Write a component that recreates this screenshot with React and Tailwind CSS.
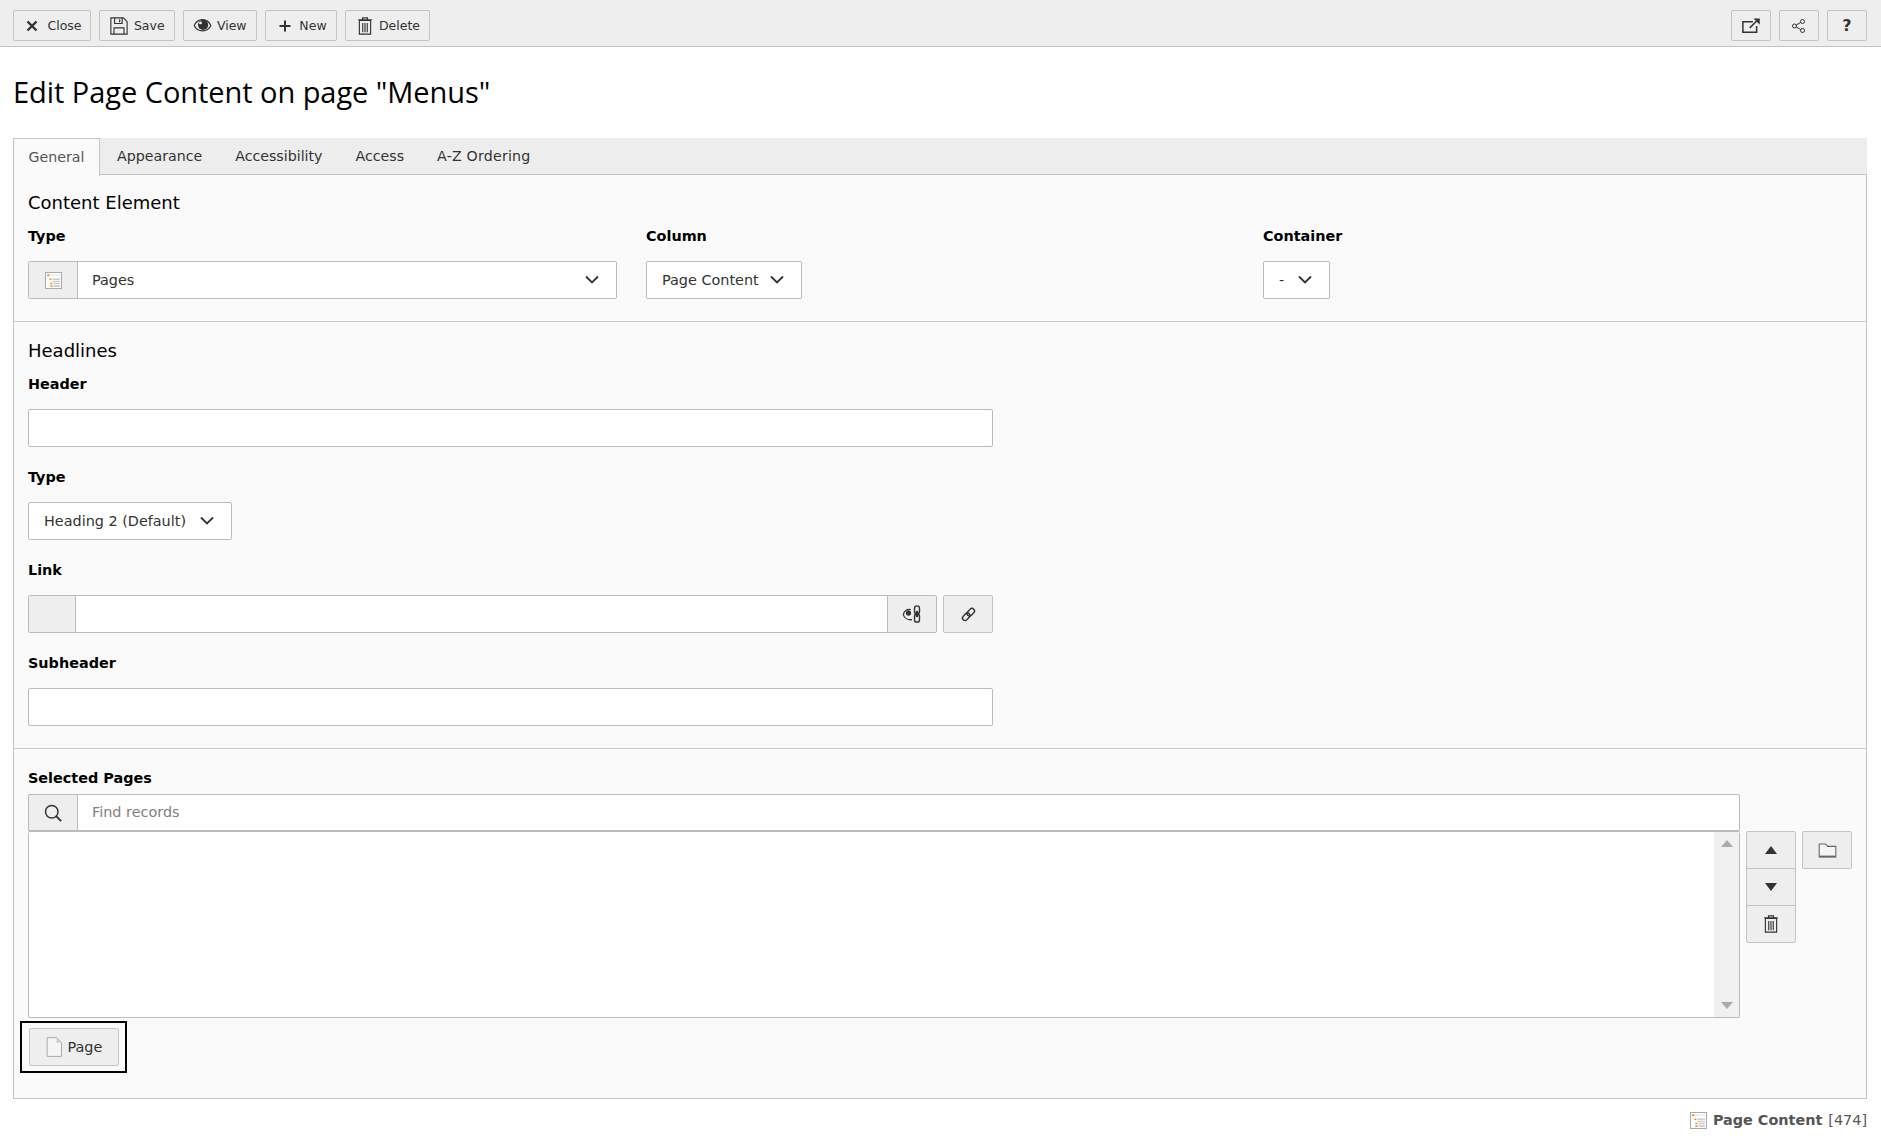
const Ico = ({ children, size = 16, cls = "" }) => (
  <svg width={size} height={size} viewBox="0 0 16 16" className={"shrink-0 " + cls} fill="none">{children}</svg>
);
const C = "#333";
const CloseI = () => <Ico><path d="M3.500 3.500l9 9M12.500 3.500l-9 9" stroke={C} strokeWidth="2.400" /></Ico>;
const SaveI = () => <Ico size={20}><path d="M1.500 1.500h10l3 3v10h-13z" stroke={C} strokeWidth=".9" /><path d="M4.500 1.500v4.500h6v-4.500M8.500 2.500v2.500M4 14.500v-5h8v5" stroke={C} strokeWidth=".9" /></Ico>;
const EyeI = () => <Ico size={19}><path d="M1 8C2.500 4.500 5 3 8 3s5.500 1.500 7 5c-1.500 3.500-4 4.500-7 4.500S2.500 11.500 1 8z" stroke={C} strokeWidth="1" /><circle cx="8.500" cy="7.500" r="4.300" fill={C} /><circle cx="6.300" cy="5.800" r="1.200" fill="#eee" /></Ico>;
const PlusI = () => <Ico><path d="M8 2.500v11M2.500 8h11" stroke={C} strokeWidth="2" /></Ico>;
const TrashI = () => <Ico size={20}><path d="M3.500 3.500h9v11h-9z M2.500 3h11 M6 3V1.500h4V3" stroke={C} strokeWidth=".9" /><path d="M6.200 5.500v7.500M8 5.500v7.500M9.800 5.500v7.500" stroke={C} strokeWidth=".9" /></Ico>;
const ExtI = () => <Ico size={20}><path d="M9.500 4.500H1.500v8.500h11V8" stroke={C} strokeWidth="1.200" /><path d="M7 9.500L12.500 4" stroke={C} strokeWidth="1.200" /><path d="M10 2h5v5z" fill={C} /></Ico>;
const ShareI = () => <Ico><circle cx="3.500" cy="8" r="2" stroke={C} /><circle cx="11.500" cy="3.500" r="2" stroke={C} /><circle cx="11.500" cy="12.500" r="2" stroke={C} /><path d="M5.200 7l4.600-2.600M5.200 9l4.600 2.600" stroke={C} /></Ico>;
const Chevron = () => <Ico size={16}><path d="M2 4.500l6 6 6-6" stroke={C} strokeWidth="1.800" /></Ico>;
const ContentI = ({ size = 17 }) => <Ico size={size}>
  <path d="M.5.500h15v15H.5z" fill="#fff" stroke="#aaa" />
  <path d="M2 2h12v2H2z" fill="#eee" />
  <path d="M2 2h2v2H2zM4 6h2v1.500H4zM5 10h2v1.500H5zM5 12.500h2V14H5z" fill="#f7941d" />
  <path d="M7 6h7v1.500H7zM7 8.200h7v1.300H7zM8 10h6v1.500H8zM8 12.500h6V14H8z" fill="#ccc" />
</Ico>;
const LinkI = () => <Ico size={17}><g transform="rotate(-45 8 8)"><rect x="1" y="5.600" width="8" height="4.800" rx="2.400" stroke={C} strokeWidth="1.300" /><rect x="7" y="5.600" width="8" height="4.800" rx="2.400" stroke={C} strokeWidth="1.300" /></g></Ico>;
const EyeLinkI = () => <Ico size={20}>
  <path d="M1 8.500C1.500 5.500 4 4 7 4.500" stroke={C} strokeWidth="1.100" />
  <path d="M1 8.500C2 11.500 5 13 8 12.500" stroke={C} strokeWidth="1.100" />
  <circle cx="5.200" cy="7.200" r="2.100" fill={C} />
  <rect x="10" y="1.500" width="4" height="6.500" rx="2" stroke={C} strokeWidth="1.100" />
  <rect x="10" y="8" width="4" height="6.500" rx="2" stroke={C} strokeWidth="1.100" />
  <path d="M12 5.500v5" stroke={C} strokeWidth="1.800" />
</Ico>;
const SearchI = () => <Ico size={20}><circle cx="7" cy="7" r="5" stroke={C} strokeWidth="1.200" /><path d="M10.500 10.500l4 4" stroke={C} strokeWidth="1.500" /></Ico>;
const FolderI = () => <Ico size={19}><path d="M1 13.500v-11h5.500l1.500 2h7v9z" stroke="#666" strokeWidth=".9" fill="#f5f5f5" /><path d="M1 13h14" stroke="#666" strokeWidth="1.400" /></Ico>;
const PageI = () => <Ico size={20}><path d="M2.500.500h7.500l4 4v11H2.500z" fill="#f5f5f5" stroke="#aaa" strokeWidth=".8" /><path d="M10 .500l4 4h-4z" fill="#ccc" /></Ico>;

const btn = "flex items-center justify-center bg-[#eeeeee] border border-[#c3c3c3] rounded-[2px] text-[#333]";
const field = "bg-white border border-[#bbbbbb] rounded-[2px]";
const label = "font-bold text-black text-[14.400px] leading-[20px]";

const TopBtn = ({ icon, text, w, gap, pl = 0 }) => (
  <button className={btn + " h-[31px] text-[12.500px] text-[#333]"} style={{ width: w, gap, paddingLeft: pl }}>{icon}<span className="pt-[2px]">{text}</span></button>
);

const Select = ({ text, w }) => (
  <div className={field + " h-[38px] flex items-center justify-between pl-[15px] pr-[16px] text-[14.400px] text-[#333]"} style={{ width: w }}>
    <span className="pt-[2px]">{text}</span><Chevron />
  </div>
);

export default function App() {
  return (
    <div className="w-full min-h-[1139px] bg-white text-[#333] font-['DejaVu_Sans',sans-serif]">
      <header className="h-[47px] bg-[#eeeeee] border-b border-[#c3c3c3] flex items-start justify-between pt-[10px] pl-[13px] pr-[14px]">
        <div className="flex gap-[8px]">
          <TopBtn icon={<CloseI />} text="Close" w={78} gap={7} pl={2} />
          <TopBtn icon={<SaveI />} text="Save" w={76} gap={4.500} />
          <TopBtn icon={<EyeI />} text="View" w={74} gap={4.500} />
          <TopBtn icon={<PlusI />} text="New" w={72} gap={6} pl={2} />
          <TopBtn icon={<TrashI />} text="Delete" w={85} gap={4} />
        </div>
        <div className="flex gap-[8px]">
          <button className={btn + " w-[40px] h-[31px]"}><ExtI /></button>
          <button className={btn + " w-[40px] h-[31px]"}><ShareI /></button>
          <button className={btn + " w-[40px] h-[31px] font-bold text-[16px]"}>?</button>
        </div>
      </header>

      <h1 className="h-[91px] pb-[2px] flex items-center pl-[13px] text-[29px] text-black font-['Open_Sans',sans-serif] tracking-[-0.05px]">Edit Page Content on page "Menus"</h1>

      <div className="ml-[13px] mr-[14px]">
        <nav className="h-[37px] bg-[#ededed] flex text-[14.200px]">
          <div className="w-[87px] h-[38px] bg-[#fafafa] border border-b-0 border-[#c3c3c3] flex items-center justify-center text-[#555] relative z-10">General</div>
          <div className="flex items-center pt-[2px] pl-[17px] gap-[33px] flex-1 border-b border-[#c3c3c3]">
            <span>Appearance</span><span>Accessibility</span><span>Access</span><span className="tracking-[0.2px]">A-Z Ordering</span>
          </div>
        </nav>

        <div className="border border-t-0 border-[#c3c3c3] bg-[#fafafa] h-[924px]">
          <section className="h-[147px] px-[14px] pt-[16px] border-b border-[#cccccc]">
            <h2 className="text-[18px] leading-[24px] text-black">Content Element</h2>
            <div className="grid grid-cols-[618px_617px_1fr] mt-[11px]">
              <div className="pr-[29px]">
                <div className={label}>Type</div>
                <div className={field + " mt-[15px] w-[589px] h-[38px] flex items-center text-[14.400px]"}>
                  <div className="w-[49px] h-full bg-[#eeeeee] border-r border-[#bbbbbb] flex items-center justify-center"><ContentI /></div>
                  <span className="pl-[14px] pt-[2px] flex-1">Pages</span>
                  <span className="pr-[16px]"><Chevron /></span>
                </div>
              </div>
              <div>
                <div className={label}>Column</div>
                <div className="mt-[15px]"><Select text="Page Content" w={156} /></div>
              </div>
              <div>
                <div className={label}>Container</div>
                <div className="mt-[15px]"><Select text="-" w={67} /></div>
              </div>
            </div>
          </section>

          <section className="h-[427px] px-[14px] pt-[17px] border-b border-[#cccccc]">
            <h2 className="text-[18px] leading-[24px] text-black">Headlines</h2>
            <div className={label + " mt-[11px]"}>Header</div>
            <div className={field + " mt-[15px] w-[965px] h-[38px]"} />
            <div className={label + " mt-[20px]"}>Type</div>
            <div className="mt-[15px]"><Select text="Heading 2 (Default)" w={204} /></div>
            <div className={label + " mt-[20px]"}>Link</div>
            <div className="mt-[15px] w-[965px] h-[38px] flex gap-[6px]">
              <div className={field + " flex-1 flex"}>
                <div className="w-[47px] bg-[#eeeeee] border-r border-[#bbbbbb]" />
                <div className="flex-1" />
                <div className="w-[49px] bg-[#eeeeee] border-l border-[#bbbbbb] flex items-center justify-center"><EyeLinkI /></div>
              </div>
              <button className={btn + " w-[50px]"}><LinkI /></button>
            </div>
            <div className={label + " mt-[20px]"}>Subheader</div>
            <div className={field + " mt-[15px] w-[965px] h-[38px]"} />
          </section>

          <section className="px-[14px] pt-[19px]">
            <div className={label}>Selected Pages</div>
            <div className="flex mt-[6px]">
              <div className="w-[1712px]">
                <div className={field + " h-[38px] flex items-center border-b-2 text-[14.400px]"}>
                  <div className="w-[49px] h-full bg-[#eeeeee] border-r border-[#bbbbbb] flex items-center justify-center"><SearchI /></div>
                  <span className="pl-[14px] text-[#808080]">Find records</span>
                </div>
                <div className={field + " h-[186px] border-t-0 flex justify-end"}>
                  <div className="w-[25px] bg-[#f0f0f0] flex flex-col items-center justify-between py-[8px]">
                    <span className="w-0 h-0 border-x-[6px] border-x-transparent border-b-[7px] border-b-[#aaaaaa]" />
                    <span className="w-0 h-0 border-x-[6px] border-x-transparent border-t-[7px] border-t-[#aaaaaa]" />
                  </div>
                </div>
              </div>
              <div className="ml-[6px] mt-[37px] w-[50px] h-[112px] flex flex-col border border-[#c3c3c3] rounded-[2px] bg-[#eeeeee] divide-y divide-[#c3c3c3]">
                <div className="flex-1 flex items-center justify-center"><span className="w-0 h-0 border-x-[6px] border-x-transparent border-b-[8px] border-b-[#333333]" /></div>
                <div className="flex-1 flex items-center justify-center"><span className="w-0 h-0 border-x-[6px] border-x-transparent border-t-[8px] border-t-[#333333]" /></div>
                <div className="flex-1 flex items-center justify-center"><TrashI /></div>
              </div>
              <button className={btn + " ml-[6px] mt-[37px] w-[50px] h-[38px]"}><FolderI /></button>
            </div>
            <div className="mt-[3px] w-[107px] h-[52px] -ml-[8px] border-2 border-black flex items-center justify-center">
              <button className={btn + " w-[90px] h-[38px] text-[14.400px] !justify-start pl-[14px] gap-[4px]"}><PageI /><span className="pt-[2px]">Page</span></button>
            </div>
          </section>
        </div>

        <footer className="h-[42px] pt-[1px] flex items-center justify-end text-[14.400px] text-[#555]">
          <ContentI /><b className="ml-[6px]">Page Content</b><span className="ml-[6px] font-normal">[474]</span>
        </footer>
      </div>
    </div>
  );
}
